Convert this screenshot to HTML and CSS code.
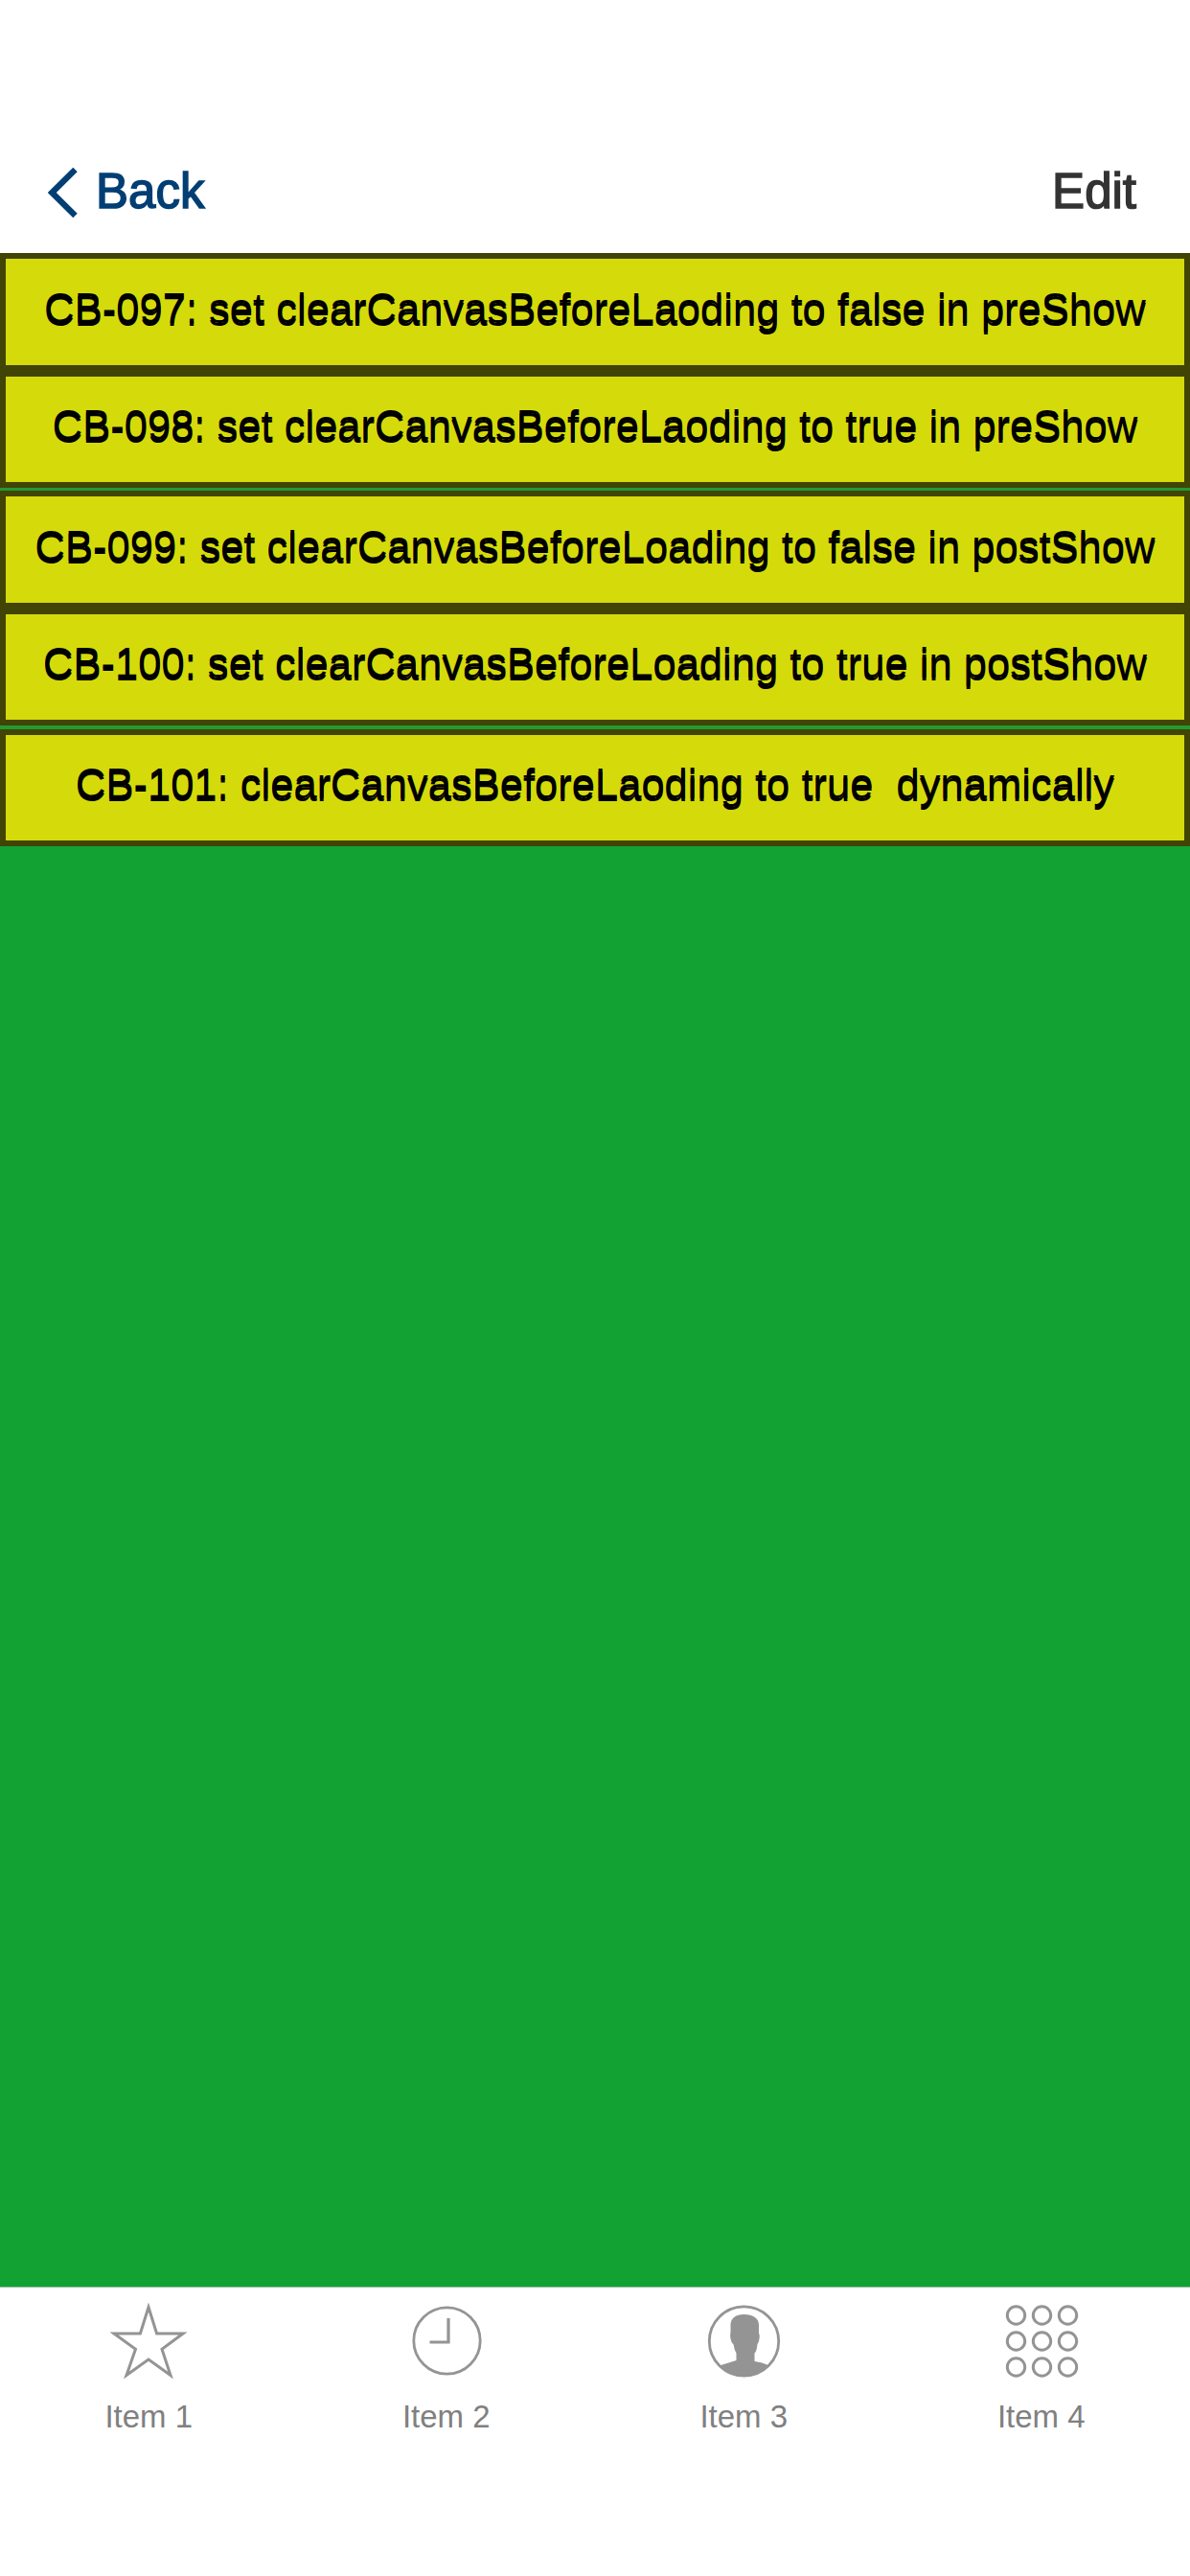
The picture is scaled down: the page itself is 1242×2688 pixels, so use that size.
FILE: index.html
```html
<!DOCTYPE html>
<html lang="en">
<head>
<meta charset="utf-8">
<title>Canvas tests</title>
<link rel="stylesheet" href="styles.css">
</head>
<body>
<div class="screen">
  <header class="nav">
    <a class="back">
      <svg class="chevron" width="32" height="54" viewBox="0 0 32 54"><path d="M28.500 3 4.300 27 28.500 51" fill="none" stroke="#003e74" stroke-width="6.300"/></svg>
      <span class="nav-text">Back</span>
    </a>
    <span class="edit nav-text">Edit</span>
  </header>
  <main class="list">
    <div class="row tall"><span>CB-097: set clearCanvasBeforeLaoding to false in preShow</span></div>
    <div class="row"><span>CB-098: set clearCanvasBeforeLaoding to true in preShow</span></div>
    <div class="divider"></div>
    <div class="row tall"><span>CB-099: set clearCanvasBeforeLoading to false in postShow</span></div>
    <div class="row"><span>CB-100: set clearCanvasBeforeLoading to true in postShow</span></div>
    <div class="divider thick"></div>
    <div class="row"><span>CB-101: clearCanvasBeforeLaoding to true  dynamically</span></div>
  </main>
  <footer class="tabs">
    <div class="tab">
      <svg class="icon" viewBox="0 0 80 80"><path d="M40 4.500 48.600 32H76L54 48.300 63 75.500 40 59 17 75.500 26.500 48.300 4 32H31.400Z" stroke-width="3"/></svg>
      <span>Item 1</span>
    </div>
    <div class="tab">
      <svg class="icon" viewBox="0 0 80 80"><circle cx="40.500" cy="39.500" r="34.700" stroke-width="2.800"/><path d="M42 16V41H22.500" stroke-width="3.200"/></svg>
      <span>Item 2</span>
    </div>
    <div class="tab">
      <svg class="icon" viewBox="0 0 80 80"><circle cx="40.500" cy="40" r="36.200" stroke-width="2.800"/><path class="solid" d="M40.500 12C50 12 56 16 56 23V32C57.500 33 56.500 41 54.500 43C54 47 53.500 51 51.500 52.500V61C56 62 62 62.500 67 66A37 37 0 0 1 15 66C20 63 27 62 32.500 60V52.500C31 50 30 47 29.500 43C26.500 42 25.500 33 26.500 31V22C27 16 32 12 40.500 12Z"/></svg>
      <span>Item 3</span>
    </div>
    <div class="tab">
      <svg class="icon" viewBox="0 0 80 80"><g stroke-width="3"><circle cx="13.500" cy="13" r="9.200"/><circle cx="40.500" cy="13" r="9.200"/><circle cx="67.500" cy="13" r="9.200"/><circle cx="13.500" cy="40" r="9.200"/><circle cx="40.500" cy="40" r="9.200"/><circle cx="67.500" cy="40" r="9.200"/><circle cx="13.500" cy="67" r="9.200"/><circle cx="40.500" cy="67" r="9.200"/><circle cx="67.500" cy="67" r="9.200"/></g></svg>
      <span>Item 4</span>
    </div>
  </footer>
</div>
</body>
</html>
```
FILE: styles.css
```css
body {
  margin: 0;
  background: #fff;
  font-family: "Liberation Sans", Arial, sans-serif;
}
.screen {
  display: flex;
  flex-direction: column;
  height: 2688px;
}
.nav {
  box-sizing: border-box;
  height: 264px;
  padding: 135px 56px 0 50px;
  display: flex;
  justify-content: space-between;
  align-items: center;
  font-size: 51px;
  line-height: 60px;
}
.back {
  display: flex;
  align-items: center;
  gap: 18px;
  color: #003e74;
  -webkit-text-stroke: 1.500px #003e74;
}
.nav-text {
  transform: translateY(-1px) scaleY(1.03);
}
.chevron {
  margin-top: 3px;
}
.edit {
  color: #333;
  -webkit-text-stroke: 1.500px #333;
}
.list {
  flex: 1;
  background: #12a233;
}
.row {
  box-sizing: border-box;
  height: 122px;
  padding-bottom: 8px;
  border: 6px solid #414405;
  background: #d5db0a;
  display: flex;
  align-items: center;
  justify-content: center;
  font-size: 43.540px;
  line-height: 52px;
  color: #000;
  text-shadow: 0 3px 0 #000;
  white-space: pre;
}
.row.tall {
  height: 123px;
}
.divider {
  height: 3px;
  background: #219a33;
}
.divider.thick {
  height: 4px;
}
.tabs {
  box-sizing: border-box;
  height: 302px;
  border-top: 1px solid #8ab893;
  display: grid;
  grid-template-columns: repeat(4, 1fr);
}
.tab {
  display: flex;
  flex-direction: column;
  align-items: center;
  padding-top: 16px;
  font-size: 33px;
  line-height: 38px;
  color: #808080;
}
.icon {
  width: 80px;
  height: 80px;
  margin-bottom: 20px;
  fill: none;
  stroke: #949494;
}
.solid {
  fill: #949494;
  stroke: none;
}
```
